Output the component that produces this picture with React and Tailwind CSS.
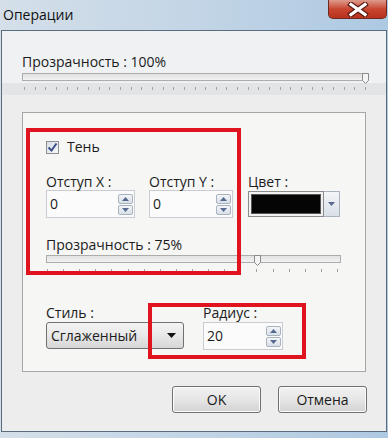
import React from "react";

function Ticks({ count, className }) {
  return (
    <div className={`flex justify-between ${className}`}>
      {Array.from({ length: count }).map((_, i) => (
        <span key={i} className="w-px h-[3px] bg-[#a3a3a3]" />
      ))}
    </div>
  );
}

function Thumb({ className }) {
  return (
    <svg className={className} width="7" height="11" viewBox="0 0 7 11">
      <path d="M0.5 0.5 H6.5 V7.5 L3.5 10.5 L0.5 7.5 Z" fill="#f4f4f4" stroke="#8a8a8a" />
    </svg>
  );
}

function SpinButton({ up }) {
  return (
    <div className="w-[15px] h-[10px] border border-[#a9b3c0] rounded-[2px] bg-gradient-to-b from-[#f3f5f8] to-[#d9e0e8] flex items-center justify-center">
      <svg width="7" height="4" viewBox="0 0 7 4">
        {up ? (
          <path d="M0 4 L3.5 0 L7 4 Z" fill="#56698f" />
        ) : (
          <path d="M0 0 L3.5 4 L7 0 Z" fill="#56698f" />
        )}
      </svg>
    </div>
  );
}

function SpinInput({ value, width }) {
  return (
    <div
      className="h-[28px] border border-[#c9ccd2] bg-[#fbfbfb] flex items-center justify-between pl-[3px] pr-[1px]"
      style={{ width }}
    >
      <span className="text-[14px] leading-[16px]">{value}</span>
      <div className="flex flex-col gap-[1px]">
        <SpinButton up />
        <SpinButton />
      </div>
    </div>
  );
}

function Label({ children, className = "" }) {
  return <div className={`text-[14px] leading-[16px] ${className}`}>{children}</div>;
}

function WinButton({ children }) {
  return (
    <button className="w-[89px] h-[27px] rounded-[3px] border border-[#707070] bg-gradient-to-b from-[#f2f2f2] via-[#e6e6e6] to-[#d2d2d2] text-[14px] leading-[16px] text-[#1a1a1a] shadow-[inset_0_0_0_1px_#fbfbfb]">
      {children}
    </button>
  );
}

export default function App() {
  return (
    <div className="w-[388px] h-[438px] overflow-hidden bg-gradient-to-r from-[#d4dfe9] via-[#c3d5e6] to-[#adc9e2] font-['Open_Sans',sans-serif] text-[#1b1b1b]">
      {/* Title bar */}
      <div className="h-[30px] flex items-start justify-between pl-[3px] pr-[1px]">
        <span className="mt-[7px] text-[14px] leading-[16px] text-[#111]">Операции</span>
        <div className="w-[59px] h-[19px] rounded-b-[5px] border border-t-0 border-[#6e2a22] bg-gradient-to-b from-[#dd9a8c] via-[#c8452f] to-[#b8321e] flex items-center justify-center">
          <svg width="22" height="15" viewBox="0 0 22 15">
            <path d="M4 2.5 L18 12.5 M18 2.5 L4 12.5" stroke="#5a1a12" strokeWidth="5.5" strokeLinecap="square" />
            <path d="M4 2.5 L18 12.5 M18 2.5 L4 12.5" stroke="#ffffff" strokeWidth="3.2" strokeLinecap="square" />
          </svg>
        </div>
      </div>

      {/* Dialog body */}
      <div className="ml-[1px] w-[386px] h-[402px] border border-[#5b6c7e] bg-[#ededed] flex flex-col">
        {/* top panel */}
        <div className="h-[52px] bg-[#eff1f3] pl-[20px] pt-[23px]">
          <Label>Прозрачность : 100%</Label>
          <div className="mt-[3px] relative w-[347px] h-[8px] border border-[#acacac] bg-gradient-to-b from-[#e2e2e2] to-[#f2f2f2]">
            <Thumb className="absolute top-[-1px] right-[-1px]" />
          </div>
        </div>
        <div className="h-[12px] bg-[#e3e4e6] pt-[4px] pl-[22px] pr-[20px]">
          <Ticks count={33} />
        </div>

        {/* group box */}
        <div className="mt-[17px] ml-[20px] w-[344px] h-[260px] border border-[#a6a6a6] bg-[#f6f6f5] relative pl-[23px]">
          <div className="pt-[26px] flex items-center gap-[8px]">
            <div className="w-[13px] h-[13px] border border-[#8e8f8f] bg-gradient-to-br from-[#d8dde6] to-[#f6f7f9] flex items-center justify-center">
              <svg width="11" height="11" viewBox="0 0 11 11">
                <path d="M1.5 5.5 L4.5 8.5 L9.5 1.5" fill="none" stroke="#3b4e88" strokeWidth="2" />
              </svg>
            </div>
            <Label>Тень</Label>
          </div>

          <div className="mt-[19px] flex items-start">
            <div>
              <Label>Отступ X :</Label>
              <SpinInput value="0" width={89} />
            </div>
            <div className="ml-[14px]">
              <Label>Отступ Y :</Label>
              <SpinInput value="0" width={84} />
            </div>
            <div className="ml-[15px]">
              <Label>Цвет :</Label>
              <div className="flex h-[26px] mt-[1px]">
                <div className="w-[76px] h-full border border-[#8c8c8c] bg-[#f0f0f0] p-[2px]">
                  <div className="w-full h-full bg-[#050505] border border-[#555]" />
                </div>
                <div className="w-[16px] h-full border border-l-0 border-[#a9b3c0] bg-gradient-to-b from-[#f3f5f8] to-[#d9e0e8] flex items-center justify-center">
                  <svg width="7" height="4" viewBox="0 0 7 4">
                    <path d="M0 0 L3.5 4 L7 0 Z" fill="#56698f" />
                  </svg>
                </div>
              </div>
            </div>
          </div>

          <Label className="mt-[19px]">Прозрачность : 75%</Label>
          <div className="mt-[2px] relative w-[295px] h-[8px] border border-[#acacac] bg-gradient-to-b from-[#e2e2e2] to-[#f2f2f2]">
            <Thumb className="absolute top-[-1px] left-[207px]" />
          </div>
          <Ticks count={19} className="mt-[6px] w-[292px] pl-[1px]" />

          <div className="mt-[33px] flex items-start">
            <div>
              <Label>Стиль :</Label>
              <div className="mt-[1px] w-[138px] h-[27px] rounded-[3px] border border-[#707070] bg-gradient-to-b from-[#f3f3f3] via-[#e8e8e8] to-[#d6d6d6] flex items-center justify-between pl-[4px] pr-[7px]">
                <span className="text-[14px] leading-[16px]">Сглаженный</span>
                <svg width="9" height="5" viewBox="0 0 9 5">
                  <path d="M0 0 L4.5 5 L9 0 Z" fill="#111" />
                </svg>
              </div>
            </div>
            <div className="ml-[19px]">
              <Label>Радиус :</Label>
              <div className="mt-[1px]">
                <SpinInput value="20" width={80} />
              </div>
            </div>
          </div>

          {/* annotation rectangles */}
          <div className="absolute left-[3px] top-[15px] w-[215px] h-[147px] border-[4px] border-[#e0141f]" />
          <div className="absolute left-[125px] top-[190px] w-[158px] h-[56px] border-[4px] border-[#e0141f]" />
        </div>

        {/* buttons */}
        <div className="mt-[14px] flex justify-end gap-[17px] pr-[19px]">
          <WinButton>OK</WinButton>
          <WinButton>Отмена</WinButton>
        </div>
      </div>
    </div>
  );
}
